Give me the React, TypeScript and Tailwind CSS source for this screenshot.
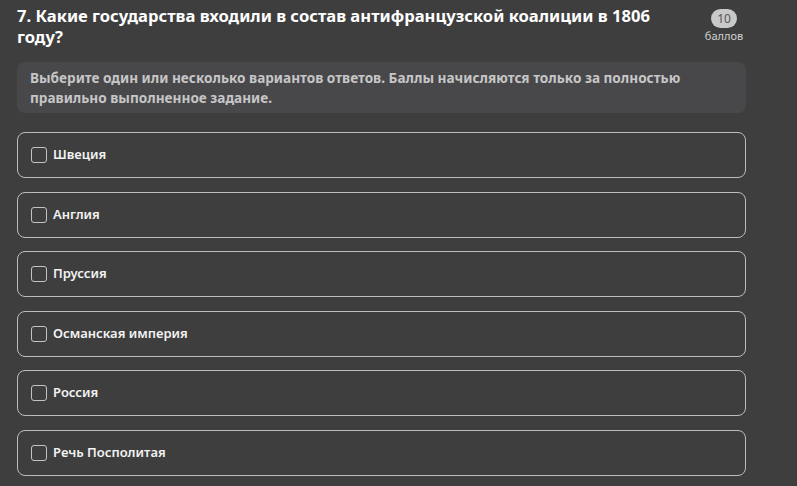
const options = [
  "Швеция",
  "Англия",
  "Пруссия",
  "Османская империя",
  "Россия",
  "Речь Посполитая",
];

const App = () => {
  return (
    <div
      className="min-h-[486px] w-full bg-[#3e3e3e] px-[17px] pt-[5px] pb-4 text-white"
      style={{ fontFamily: '"Noto Sans", "Open Sans", sans-serif' }}
    >
      {/* HEADER */}
      <div className="flex items-start justify-between w-[729px]">
        <h1 className="text-[16.6px] leading-[21px] font-bold text-white">
          7. Какие государства входили в состав антифранцузской коалиции в 1806
          <br />
          году?
        </h1>
        <div className="flex flex-col items-center w-[44px] pt-[4px]">
          <span className="h-[19px] w-[26px] rounded-full bg-[#c9c9c9] text-[#555] text-[12px] leading-[19px] text-center">
            10
          </span>
          <span className="text-[11px] leading-[14px] text-[#d0d0d0] mt-[1px]">баллов</span>
        </div>
      </div>

      {/* HINT */}
      <div className="mt-[15px] w-[729px] rounded-lg bg-[#48484b] px-[13px] pt-[6px] pb-[5px] text-[13.6px] leading-[20px] font-bold text-[#c6c6c6]">
        Выберите один или несколько вариантов ответов. Баллы начисляются только за полностью
        <br />
        правильно выполненное задание.
      </div>

      {/* OPTIONS */}
      <div className="mt-[19px] flex flex-col gap-[13.5px] w-[729px]">
        {options.map((item) => (
          <label
            key={item}
            className="flex h-[46px] items-center gap-[6px] rounded-lg border-[1.5px] border-[#bcbcbc] px-[13px] cursor-pointer"
          >
            <span className="h-4 w-4 rounded-[3px] border-[1.5px] border-[#c4c4c4]" />
            <span className="text-[13px] font-semibold text-[#f2f2f2]">{item}</span>
          </label>
        ))}
      </div>
    </div>
  );
};

export default App;
